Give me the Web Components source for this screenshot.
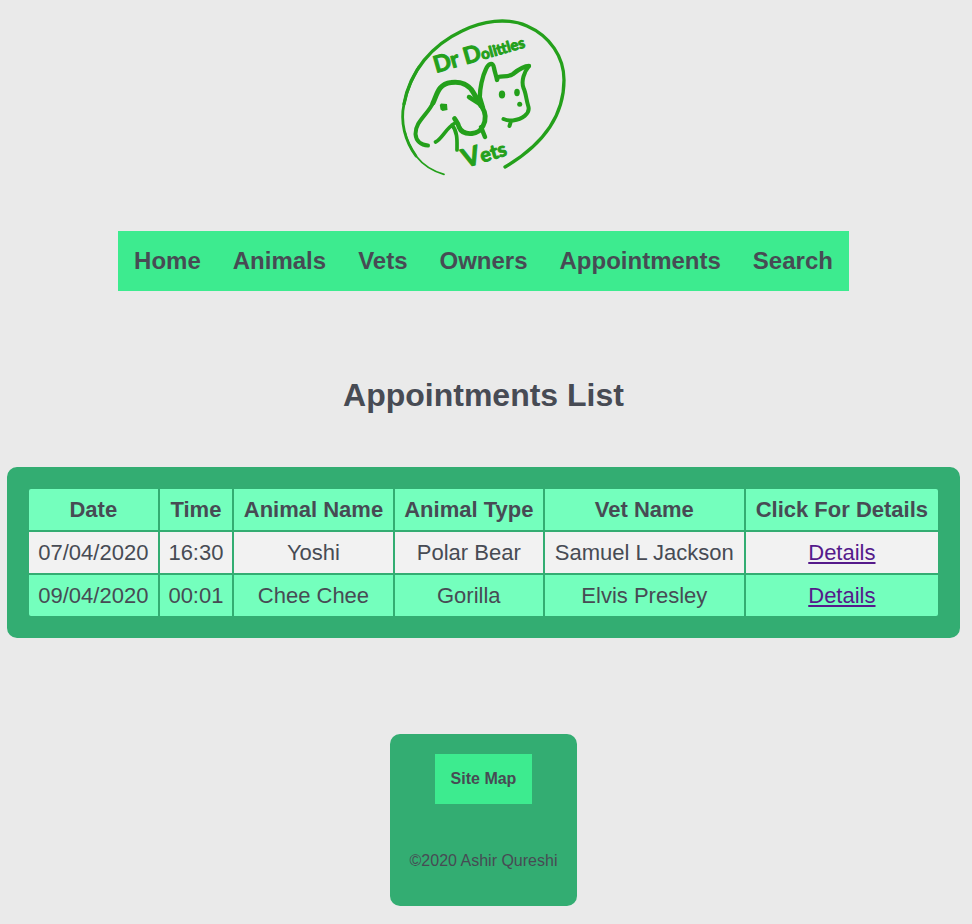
<!DOCTYPE html>
<html lang="en">
<head>
<meta charset="utf-8">
<meta name="viewport" content="width=device-width, initial-scale=1">
<title>Appointments List</title>
<style>
body {
  margin: 0;
  background: #eaeaea;
  color: #474b54;
  font-family: "Liberation Sans", Arial, sans-serif;
  font-size: 16px;
  --panel: #33ad72;
  --bar: #3deb8f;
  --cell: #74ffbd;
  --cell-alt: #f2f2f2;
  --ink: #474b54;
}
</style>
</head>
<body>
<vet-page>
  <vet-logo slot="logo"></vet-logo>
  <vet-nav slot="nav">
    <vet-link href="#home">Home</vet-link>
    <vet-link href="#animals">Animals</vet-link>
    <vet-link href="#vets">Vets</vet-link>
    <vet-link href="#owners">Owners</vet-link>
    <vet-link href="#appointments">Appointments</vet-link>
    <vet-link href="#search">Search</vet-link>
  </vet-nav>
  <span slot="title">Appointments List</span>
  <appointment-table></appointment-table>
  <vet-footer slot="footer">
    <vet-link slot="link" href="#sitemap">Site Map</vet-link>
    ©2020 Ashir Qureshi
  </vet-footer>
</vet-page>

<script>
function define(name, html, setup) {
  const template = document.createElement('template');
  template.innerHTML = html;
  customElements.define(name, class extends HTMLElement {
    constructor() {
      super();
      this.attachShadow({ mode: 'open' }).append(template.content.cloneNode(true));
    }
    connectedCallback() { if (setup) setup(this); }
  });
}

define('vet-page', `
  <style>
    :host { display: flex; flex-direction: column; align-items: center; padding: 10px 12px 18px 7px; }
    header { display: flex; flex-direction: column; align-items: center; gap: 51px; }
    main { width: 100%; padding: 86px 0 96px; }
    h1 { margin: 0 0 54px; font-size: 32px; line-height: 36px; text-align: center; }
  </style>
  <header><slot name="logo"></slot><slot name="nav"></slot></header>
  <main><h1><slot name="title"></slot></h1><slot></slot></main>
  <slot name="footer"></slot>`);

define('vet-logo', `
  <style>
    :host { display: block; }
    svg { display: block; }
    .art { fill: none; stroke: #24a01b; stroke-width: 4; stroke-linecap: round; stroke-linejoin: round; }
    .solid, text { fill: #24a01b; }
    text { font-family: Lato, "Liberation Sans", sans-serif; font-weight: 700; stroke: #24a01b; stroke-width: 1; stroke-linejoin: round; }
  </style>
  <svg width="179" height="170" viewBox="394 10 179 170" role="img" aria-label="Dr Dolittles Vets">
    <g class="art">
      <path stroke-width="1.8" d="M444 174.300C432 171 423 165 416 156C411 149 407 141 405 132"/>
      <path stroke-width="2.8" d="M416 156C405 141 400 122 404 104C407 89 412 78 419 67"/>
      <path stroke-width="3.300" d="M404 104C410 71 432 45 462 31C482 21 507 17 527 26C550 36 564 57 564 80C564 120 539 147 505 167"/>
      <path d="M428 145.500C421 145 416 141 415.500 134C415 122 428 114 433 103"/>
      <path stroke-width="5" d="M433 103C437 95 438 84 451 82.500C461 81 469 85 473 92C476 97 479 102 481 106"/>
      <path stroke-width="4.800" d="M482 107C486 113 486 120 483 126C481 130 478 133 472 133.500C466 134 461 132 459 127C458 123 456 121 454.500 118.500"/>
      <path d="M469 97L480 104M480 98L483 108M481 127L485 137" stroke-width="4.500"/>
      <path d="M435.500 142C442 139 446 128 455 123M452 125C458 132 457 142 457 150" stroke-width="3.700"/>
      <path stroke-width="4.300" d="M480 101C479 89 483 75 486 69C488 64 493 61 494 68C495 73 496 75 497 80L498 77C504 76 509 77 513 74C519 69 524 66 529 66"/>
      <path d="M529 66C524 72 521 81 523.500 88C526 93 526 99 528.500 107C530 114 522 119 513 120.500C509 121 506 120 503.500 119M511 121L509.500 126"/>
    </g>
    <path class="solid" d="M441 103.500L447 104L447.500 110L442.500 111L440.500 109.500L439.800 105Z"/>
    <ellipse class="solid" cx="502" cy="94.500" rx="3.200" ry="4"/>
    <ellipse class="solid" cx="517" cy="92.500" rx="2.800" ry="3.700"/>
    <circle class="solid" cx="519.700" cy="104.300" r="2.500"/>
    <text x="436" y="73" font-size="23" transform="rotate(-16 436 73)">Dr D<tspan font-size="15">olittles</tspan></text>
    <text x="465" y="168" font-size="26" transform="rotate(-17 465 168)">V<tspan font-size="20">ets</tspan></text>
  </svg>`);

define('vet-nav', `
  <style>
    :host { display: block; font-size: 24px; line-height: 28px; }
    nav { display: flex; flex-wrap: wrap; justify-content: center; background: var(--bar); }
  </style>
  <nav aria-label="Main"><slot></slot></nav>`);

define('vet-link', `
  <style>
    :host { display: block; background: var(--bar); }
    a { display: block; padding: 16px; color: var(--ink); font-weight: 700; text-decoration: none; }
    a:hover { text-decoration: underline; }
  </style>
  <a><slot></slot></a>`,
  el => { el.shadowRoot.querySelector('a').href = el.getAttribute('href'); });

define('appointment-table', `
  <style>
    :host { display: block; }
    table { width: 100%; border: 20px solid var(--panel); border-radius: 10px; background: var(--panel);
      border-spacing: 2px; font-size: 22px; line-height: 25px; text-align: center; white-space: nowrap; }
    th, td { padding: 8px; }
    th, td { background: var(--cell); }
    tbody tr:nth-child(odd) td { background: var(--cell-alt); }
    thead th:first-child { border-top-left-radius: 2px; }
    thead th:last-child { border-top-right-radius: 2px; }
    tbody tr:last-child td:first-child { border-bottom-left-radius: 2px; }
    tbody tr:last-child td:last-child { border-bottom-right-radius: 2px; }
    a { color: #551a8b; text-underline-offset: 2px; text-decoration-thickness: 2px; }
  </style>
  <table>
    <thead><tr><th scope="col">Date</th><th scope="col">Time</th><th scope="col">Animal Name</th><th scope="col">Animal Type</th><th scope="col">Vet Name</th><th scope="col">Click For Details</th></tr></thead>
    <tbody>
      <tr><td>07/04/2020</td><td>16:30</td><td>Yoshi</td><td>Polar Bear</td><td>Samuel L Jackson</td><td><a href="#appointment-1">Details</a></td></tr>
      <tr><td>09/04/2020</td><td>00:01</td><td>Chee Chee</td><td>Gorilla</td><td>Elvis Presley</td><td><a href="#appointment-2">Details</a></td></tr>
    </tbody>
  </table>`);

define('vet-footer', `
  <style>
    :host { display: block; line-height: 18px; }
    footer { display: flex; flex-direction: column; align-items: center; gap: 48px;
      padding: 20px 20px 36px; border-radius: 10px; background: var(--panel); }
    p { margin: 0; }
  </style>
  <footer><slot name="link"></slot><p><slot></slot></p></footer>`);
</script>
</body>
</html>
